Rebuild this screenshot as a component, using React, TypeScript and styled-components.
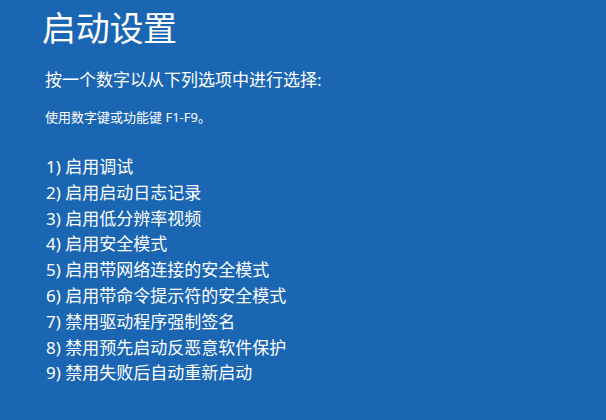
import styled, { createGlobalStyle } from "styled-components"

const GlobalStyle = createGlobalStyle`
    html, body {
        margin: 0;
        padding: 0;
        background: #1a66b2;
    }
    body {
        font-family: "Noto Sans", "Noto Sans CJK SC", sans-serif;
        color: #ffffff;
    }
`

const Screen = styled.div`
    width: 606px;
    height: 420px;
    box-sizing: border-box;
    background: #1a66b2;
    padding: 7px 0 0 42px;
    display: flex;
    flex-direction: column;
    overflow: hidden;
`

const Title = styled.h1`
    margin: 0;
    font-size: 34px;
    line-height: 40px;
    font-weight: 400;
    font-family: "Noto Sans CJK SC", sans-serif;
    letter-spacing: -0.3px;
`

const Prompt = styled.div`
    margin: 21px 0 0 3px;
    font-size: 17px;
    line-height: 24px;
    font-family: "Noto Sans", "Noto Sans CJK SC", sans-serif;
`

const Hint = styled.div`
    margin: 16px 0 0 3px;
    font-size: 13px;
    line-height: 18px;
    font-family: "Noto Sans", "Noto Sans CJK SC", sans-serif;
`

const OptionList = styled.ol`
    list-style: none;
    margin: 28px 0 0 4px;
    padding: 0;
    display: flex;
    flex-direction: column;
`

const Option = styled.li`
    font-size: 17px;
    line-height: 25.8px;
    font-family: "Noto Sans", "Noto Sans CJK SC", sans-serif;
`

const options = [
    "启用调试",
    "启用启动日志记录",
    "启用低分辨率视频",
    "启用安全模式",
    "启用带网络连接的安全模式",
    "启用带命令提示符的安全模式",
    "禁用驱动程序强制签名",
    "禁用预先启动反恶意软件保护",
    "禁用失败后自动重新启动",
]

export default function App() {
    return (
        <>
            <GlobalStyle />
            <Screen>
                <Title>启动设置</Title>
                <Prompt>按一个数字以从下列选项中进行选择:</Prompt>
                <Hint>使用数字键或功能键 F1-F9。</Hint>
                <OptionList>
                    {options.map((label, i) => (
                        <Option key={label}>{i + 1}) {label}</Option>
                    ))}
                </OptionList>
            </Screen>
        </>
    )
}
